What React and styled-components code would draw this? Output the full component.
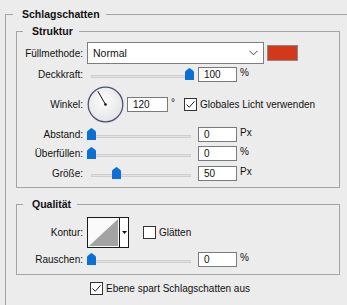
import React from "react";
import styled, { createGlobalStyle } from "styled-components";

const Global = createGlobalStyle`
  html, body { margin: 0; padding: 0; }
  body {
    background: #ececec;
    font-family: "Liberation Sans", Arial, sans-serif;
    font-size: 10px;
    color: #111;
    overflow: hidden;
  }
`;

const Page = styled.div`
  width: 347px;
  height: 305px;
  overflow: hidden;
`;

const OuterGroup = styled.section`
  position: relative;
  margin: 14px 0 0 5px;
  border-top: 1px solid #a4a4a4;
  border-left: 1px solid #a4a4a4;
  padding: 16px 0 0 10px;
  height: 300px;
  box-sizing: border-box;
`;

const GroupBox = styled.div`
  position: relative;
  width: 324px;
  box-sizing: border-box;
  border: 1px solid #a4a4a4;
  padding: ${(p) => p.$pad};
  margin-bottom: ${(p) => p.$mb || 0}px;
  display: flex;
  flex-direction: column;
`;

const Legend = styled.div`
  position: absolute;
  top: -7px;
  left: ${(p) => p.$left}px;
  padding: 0 6px 0 9px;
  background: #ececec;
  font-weight: bold;
  font-size: 10.5px;
  line-height: 12px;
  color: #111;
`;

const Row = styled.div`
  display: flex;
  align-items: center;
  height: ${(p) => p.$h}px;
  margin-top: ${(p) => p.$mt || 0}px;
`;

const Label = styled.span`
  width: 66px;
  margin-right: 4px;
  text-align: right;
  white-space: nowrap;
`;

const Select = styled.div`
  width: 177px;
  height: 22px;
  box-sizing: border-box;
  border: 1px solid #7d7d7d;
  background: #fff;
  display: flex;
  align-items: center;
  justify-content: space-between;
  padding: 0 5px 0 5px;
  font-size: 10.5px;
`;

const Swatch = styled.div`
  width: 31px;
  height: 16px;
  box-sizing: border-box;
  margin-left: 3px;
  border: 1px solid #8a8a8a;
  background: #d4381b;
`;

const SliderWrap = styled.div`
  position: relative;
  width: 107px;
  height: 15px;
  margin-right: 4px;
`;

const Track = styled.div`
  position: absolute;
  left: 4px;
  width: 100px;
  top: 8px;
  height: 3px;
  box-sizing: border-box;
  background: #e2e2e2;
  border: 1px solid #cfcfcf;
`;

const Thumb = styled.svg`
  position: absolute;
  top: 1px;
  width: 9px;
  height: 12px;
`;

const Field = styled.div`
  display: flex;
  align-items: flex-start;
  height: 15px;
`;

const NumberInput = styled.div`
  width: ${(p) => p.$w || 39}px;
  height: 15px;
  box-sizing: border-box;
  border: 1px solid #7a7a7a;
  background: #fff;
  padding-left: 5px;
  font-size: 10px;
  line-height: 14px;
`;

const Unit = styled.span`
  margin-left: 3px;
  line-height: 11px;
  font-size: 10px;
`;

const Dial = styled.svg`
  width: 37px;
  height: 37px;
  margin-right: 3px;
`;

const CheckBox = styled.span`
  display: inline-flex;
  width: 13px;
  height: 13px;
  box-sizing: border-box;
  border: 1px solid #333;
  background: #fff;
  margin-right: 3px;
  flex: none;
`;

const CheckLabel = styled.label`
  display: flex;
  align-items: center;
  margin-left: ${(p) => p.$ml || 0}px;
  white-space: nowrap;
`;

const KonturButton = styled.div`
  display: flex;
  width: 42px;
  height: 31px;
  box-sizing: border-box;
  border: 1px solid #1a1a1a;
  background: #fff;
`;

const KonturPreview = styled.svg`
  width: 31px;
  height: 29px;
  border-right: 1px solid #1a1a1a;
`;

const KonturArrow = styled.div`
  flex: 1;
  display: flex;
  align-items: center;
  justify-content: center;
  background: #fff;
`;

const BottomRow = styled.div`
  display: flex;
  margin: 7px 0 0 74px;
`;

const Check = ({ checked }) => (
  <CheckBox>
    {checked && (
      <svg width="11" height="11" viewBox="0 0 11 11">
        <path d="M1.5 5.5 L4.2 8.3 L9.6 2.2" fill="none" stroke="#222" strokeWidth="1" />
      </svg>
    )}
  </CheckBox>
);

const Slider = ({ value }) => (
  <SliderWrap>
    <Track />
    <Thumb viewBox="0 0 9 12" style={{ left: `${Math.round(value * 98)}px` }}>
      <path d="M0 12 V4.2 Q0 3.4 0.8 2.8 L3.7 0.4 Q4.5 -0.2 5.3 0.4 L8.2 2.8 Q9 3.4 9 4.2 V12 Z" fill="#0c6fd6" />
    </Thumb>
  </SliderWrap>
);

const NumberField = ({ num, unit, w }) => (
  <Field>
    <NumberInput $w={w}>{num}</NumberInput>
    <Unit>{unit}</Unit>
  </Field>
);

const SliderRow = ({ label, value, num, unit, mt }) => (
  <Row $h={15} $mt={mt}>
    <Label>{label}</Label>
    <Slider value={value} />
    <NumberField num={num} unit={unit} />
  </Row>
);

export default function App() {
  return (
    <Page>
      <Global />
      <OuterGroup>
        <Legend $left={7}>Schlagschatten</Legend>

        <GroupBox $pad="10px 0 6px 0" $mb={16}>
          <Legend $left={6}>Struktur</Legend>
          <Row $h={22}>
            <Label>Füllmethode:</Label>
            <Select>
              <span>Normal</span>
              <svg width="9" height="6" viewBox="0 0 9 6">
                <path d="M0.5 0.8 L4.5 4.8 L8.5 0.8" fill="none" stroke="#444" strokeWidth="1" />
              </svg>
            </Select>
            <Swatch />
          </Row>
          <SliderRow label="Deckkraft:" value={1} num="100" unit="%" mt={3} />
          <Row $h={37} $mt={4}>
            <Label>Winkel:</Label>
            <Dial viewBox="0 0 37 37">
              <defs>
                <radialGradient id="dialFill" cx="45%" cy="40%" r="60%">
                  <stop offset="0%" stopColor="#fdfdfd" />
                  <stop offset="100%" stopColor="#e4e4e6" />
                </radialGradient>
              </defs>
              <circle cx="18.5" cy="18.5" r="17.3" fill="url(#dialFill)" stroke="#4d5274" strokeWidth="1.3" />
              <line x1="18.5" y1="18.5" x2="10.8" y2="5.2" stroke="#111" strokeWidth="1" />
              <circle cx="18.5" cy="18.5" r="1.3" fill="#111" />
            </Dial>
            <NumberField num="120" unit="°" w={41} />
            <CheckLabel $ml={9}>
              <Check checked />
              Globales Licht verwenden
            </CheckLabel>
          </Row>
          <SliderRow label="Abstand:" value={0} num="0" unit="Px" mt={4} />
          <SliderRow label="Überfüllen:" value={0} num="0" unit="%" mt={4} />
          <SliderRow label="Größe:" value={0.25} num="50" unit="Px" mt={5} />
        </GroupBox>

        <GroupBox $pad="12px 0 7px 0">
          <Legend $left={6}>Qualität</Legend>
          <Row $h={31}>
            <Label>Kontur:</Label>
            <KonturButton>
              <KonturPreview viewBox="0 0 31 29">
                <rect x="0" y="0" width="31" height="29" fill="#fafafa" />
                <path d="M1 28 L30 1 L30 28 Z" fill="#a3a3a3" />
              </KonturPreview>
              <KonturArrow>
                <svg width="5" height="3" viewBox="0 0 5 3">
                  <path d="M0 0 H5 L2.5 3 Z" fill="#111" />
                </svg>
              </KonturArrow>
            </KonturButton>
            <CheckLabel $ml={14}>
              <Check />
              Glätten
            </CheckLabel>
          </Row>
          <SliderRow label="Rauschen:" value={0} num="0" unit="%" mt={4} />
        </GroupBox>

        <BottomRow>
          <CheckLabel>
            <Check checked />
            Ebene spart Schlagschatten aus
          </CheckLabel>
        </BottomRow>
      </OuterGroup>
    </Page>
  );
}
